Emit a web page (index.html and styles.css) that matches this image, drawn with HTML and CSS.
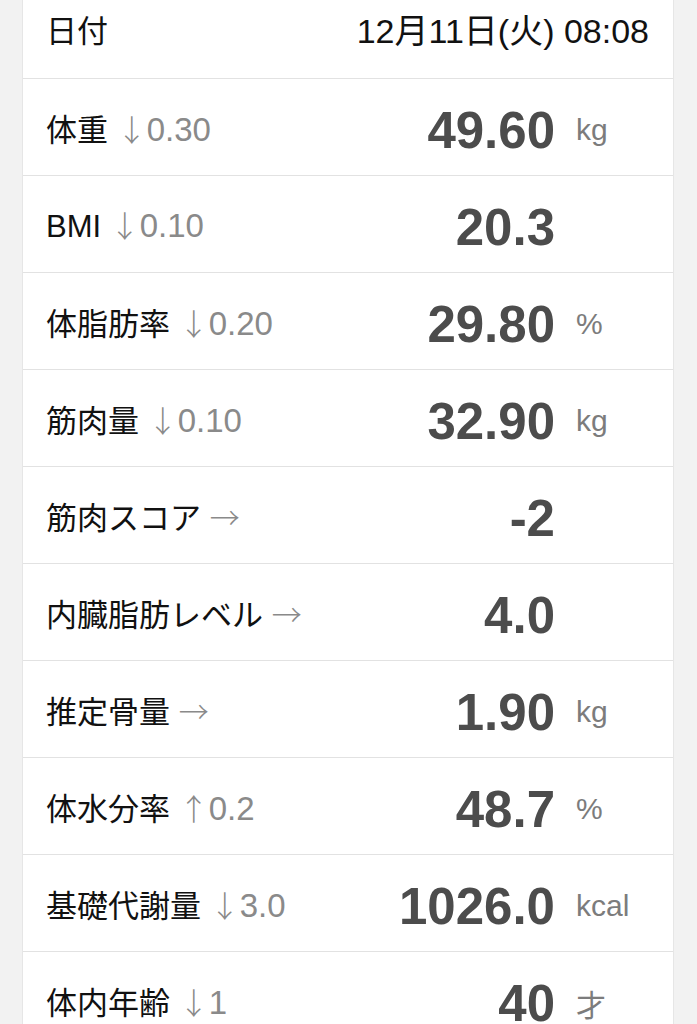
FILE: index.html
```html
<!DOCTYPE html>
<html lang="ja">
<head>
<meta charset="utf-8">
<link rel="stylesheet" href="styles.css">
</head>
<body>
<div class="card">
  <div class="row date-row">
    <span class="label">日付</span>
    <span class="date">12月11日(火) 08:08</span>
  </div>
  <div class="row">
    <span class="label">体重 <span class="arrow">↓</span><span class="delta">0.30</span></span>
    <span class="value">49.60</span><span class="unit">kg</span>
  </div>
  <div class="row">
    <span class="label">BMI <span class="arrow">↓</span><span class="delta">0.10</span></span>
    <span class="value">20.3</span><span class="unit"></span>
  </div>
  <div class="row">
    <span class="label">体脂肪率 <span class="arrow">↓</span><span class="delta">0.20</span></span>
    <span class="value">29.80</span><span class="unit">%</span>
  </div>
  <div class="row">
    <span class="label">筋肉量 <span class="arrow">↓</span><span class="delta">0.10</span></span>
    <span class="value">32.90</span><span class="unit">kg</span>
  </div>
  <div class="row">
    <span class="label">筋肉スコア <span class="arrow">→</span></span>
    <span class="value">-2</span><span class="unit"></span>
  </div>
  <div class="row">
    <span class="label">内臓脂肪レベル <span class="arrow">→</span></span>
    <span class="value">4.0</span><span class="unit"></span>
  </div>
  <div class="row">
    <span class="label">推定骨量 <span class="arrow">→</span></span>
    <span class="value">1.90</span><span class="unit">kg</span>
  </div>
  <div class="row">
    <span class="label">体水分率 <span class="arrow">↑</span><span class="delta">0.2</span></span>
    <span class="value">48.7</span><span class="unit">%</span>
  </div>
  <div class="row">
    <span class="label">基礎代謝量 <span class="arrow">↓</span><span class="delta">3.0</span></span>
    <span class="value">1026.0</span><span class="unit">kcal</span>
  </div>
  <div class="row">
    <span class="label">体内年齢 <span class="arrow">↓</span><span class="delta">1</span></span>
    <span class="value">40</span><span class="unit">才</span>
  </div>
</div>
</body>
</html>
```
FILE: styles.css
```css
html, body {
  margin: 0;
  padding: 0;
  background: #f2f2f2;
}

body {
  font-family: "Liberation Sans", "Noto Sans CJK JP", sans-serif;
  overflow: hidden;
}

.card {
  box-sizing: border-box;
  width: 652px;
  margin: -18px 0 0 22px;
  background: #ffffff;
  border-left: 1px solid #e6e6e6;
  border-right: 1px solid #e6e6e6;
}

.row {
  box-sizing: border-box;
  height: 97px;
  padding: 0 23px 0 23px;
  border-bottom: 1px solid #e2e2e2;
  display: grid;
  grid-template-columns: 1fr auto 74px;
  column-gap: 21px;
  align-items: center;
}

.date-row {
  grid-template-columns: 1fr auto;
  column-gap: 0;
  padding-bottom: 4px;
}

.label {
  font-size: 31px;
  color: #111111;
  white-space: nowrap;
}

.date {
  font-size: 34px;
  color: #111111;
  white-space: nowrap;
  margin-right: 1px;
}

.arrow {
  font-family: "Noto Sans CJK JP", sans-serif;
  font-size: 30px;
  color: #8a8a8a;
  font-weight: 300;
}

.delta {
  color: #8a8a8a;
  font-size: 33px;
}

.value {
  font-size: 51px;
  font-weight: bold;
  color: #4c4c4c;
  text-align: right;
  padding-top: 6px;
}

.unit {
  font-size: 30px;
  color: #7c7c7c;
  padding-top: 6px;
}
```
